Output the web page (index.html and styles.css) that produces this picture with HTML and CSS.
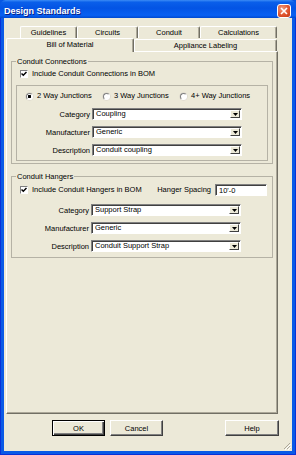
FILE: index.html
```html
<!DOCTYPE html>
<html lang="en">

<head>
    <meta charset="UTF-8">
    <meta name="viewport" content="width=device-width, initial-scale=1.0">
    <title>Design Standards</title>
    <link rel="stylesheet" href="styles.css">
</head>

<body>
    <div class="window">
        <div class="titlebar">
            <span class="title">Design Standards</span>
            <span class="close-btn">
                <svg width="8" height="8" viewBox="0 0 8 8"><path d="M1 1L7 7M7 1L1 7" stroke="#fff" stroke-width="1.6" /></svg>
            </span>
        </div>

        <div class="frame">
            <div class="client">
                <div class="tab-row back">
                    <div class="tab w-guidelines">Guidelines</div>
                    <div class="tab w-circuits">Circuits</div>
                    <div class="tab w-conduit">Conduit</div>
                    <div class="tab w-calc">Calculations</div>
                </div>
                <div class="tab-row front">
                    <div class="tab active w-bom">Bill of Material</div>
                    <div class="tab w-labeling">Appliance Labeling</div>
                </div>

                <div class="panel">
                    <fieldset class="group">
                        <legend>Conduit Connections</legend>
                        <div class="check-row">
                            <span class="checkbox"><svg width="6" height="6" viewBox="0 0 6 6"><path d="M0.5 2.5L2.3 4.3L5.5 1" stroke="#000" stroke-width="1.5" fill="none" /></svg></span>
                            Include Conduit Connections in BOM
                        </div>

                        <div class="subgroup">
                            <div class="radio-row">
                                <span class="radio-opt"><span class="radio on"></span>2 Way Junctions</span>
                                <span class="radio-opt"><span class="radio"></span>3 Way Junctions</span>
                                <span class="radio-opt"><span class="radio"></span>4+ Way Junctions</span>
                            </div>
                            <div class="field first">
                                <span class="field-label">Category</span>
                                <div class="combo">Coupling<span class="drop"><svg width="5" height="3" viewBox="0 0 5 3"><path d="M0 0H5L2.5 3Z" /></svg></span></div>
                            </div>
                            <div class="field">
                                <span class="field-label">Manufacturer</span>
                                <div class="combo">Generic<span class="drop"><svg width="5" height="3" viewBox="0 0 5 3"><path d="M0 0H5L2.5 3Z" /></svg></span></div>
                            </div>
                            <div class="field">
                                <span class="field-label">Description</span>
                                <div class="combo">Conduit coupling<span class="drop"><svg width="5" height="3" viewBox="0 0 5 3"><path d="M0 0H5L2.5 3Z" /></svg></span></div>
                            </div>
                        </div>
                    </fieldset>

                    <fieldset class="group hangers">
                        <legend>Conduit Hangers</legend>
                        <div class="check-row tall">
                            <span class="checkbox"><svg width="6" height="6" viewBox="0 0 6 6"><path d="M0.5 2.5L2.3 4.3L5.5 1" stroke="#000" stroke-width="1.5" fill="none" /></svg></span>
                            Include Conduit Hangers in BOM
                            <span class="spacing-label">Hanger Spacing</span>
                            <div class="textbox">10'-0</div>
                        </div>
                        <div class="field spaced">
                            <span class="field-label">Category</span>
                            <div class="combo">Support Strap<span class="drop"><svg width="5" height="3" viewBox="0 0 5 3"><path d="M0 0H5L2.5 3Z" /></svg></span></div>
                        </div>
                        <div class="field">
                            <span class="field-label">Manufacturer</span>
                            <div class="combo">Generic<span class="drop"><svg width="5" height="3" viewBox="0 0 5 3"><path d="M0 0H5L2.5 3Z" /></svg></span></div>
                        </div>
                        <div class="field">
                            <span class="field-label">Description</span>
                            <div class="combo">Conduit Support Strap<span class="drop"><svg width="5" height="3" viewBox="0 0 5 3"><path d="M0 0H5L2.5 3Z" /></svg></span></div>
                        </div>
                    </fieldset>
                </div>

                <div class="button-row">
                    <button class="btn default">OK</button>
                    <button class="btn">Cancel</button>
                    <button class="btn help">Help</button>
                </div>

                <span class="grip">
                    <svg width="8" height="8" viewBox="0 0 8 8">
                        <path d="M7 1L1 7M7 4L4 7M7 6.5L6.5 7" stroke="#aca899" stroke-width="1" />
                        <path d="M8 2L2 8M8 5L5 8" stroke="#fff" stroke-width="1" />
                    </svg>
                </span>
            </div>
        </div>
    </div>
</body>

</html>
```

FILE: styles.css
```css
* {
    box-sizing: border-box;
}

body {
    margin: 0;
    font-family: "Liberation Sans", Arial, sans-serif;
    font-size: 7.5px;
    color: #000;
    background: #fff;
}

.window {
    width: 296px;
    height: 455px;
    display: flex;
    flex-direction: column;
    background: #0857e2;
}

.titlebar {
    height: 18px;
    display: flex;
    align-items: center;
    justify-content: space-between;
    padding: 3px 5px 0 4px;
    background: linear-gradient(to bottom, #3c8cf5 0%, #0a5fea 12%, #0354e4 45%, #0860f2 85%, #0049cf 100%);
    border-radius: 6px 6px 0 0;
}

.title {
    color: #fff;
    font-weight: bold;
    font-size: 9px;
    text-shadow: 1px 1px #0a1f84;
}

.close-btn {
    width: 14px;
    height: 14px;
    display: flex;
    align-items: center;
    justify-content: center;
    border: 1px solid #fff;
    border-radius: 3px;
    background: radial-gradient(circle at 35% 30%, #f09a7c 0%, #e0552f 55%, #c23a14 100%);
}

.frame {
    flex: 1;
    display: flex;
    padding: 0 4px 4px;
    background: #0a5ae6;
    box-shadow: inset 1px 0 #0831d9, inset -1px 0 #0831d9, inset 0 -1px #0831d9;
}

.client {
    flex: 1;
    display: flex;
    flex-direction: column;
    position: relative;
    padding: 8px 0 0 2px;
    background: #ece9d8;
}

/* tabs */

.tab-row {
    display: flex;
}

.tab-row.back {
    height: 12px;
    margin-left: 14px;
}

.tab-row.front {
    height: 13px;
    align-items: flex-end;
}

.tab {
    height: 12px;
    display: flex;
    align-items: center;
    justify-content: center;
    line-height: 1;
    background: #ece9d8;
    border-top: 1px solid #fff;
    border-left: 1px solid #fff;
    border-right: 1px solid #716f64;
    box-shadow: inset -1px 0 #aca899;
    border-radius: 2px 2px 0 0;
}

.tab.active {
    height: 14px;
    margin-bottom: -1px;
    padding-bottom: 1px;
    z-index: 1;
}

.w-guidelines { width: 57px; }
.w-circuits { width: 61px; }
.w-conduit { width: 62px; }
.w-calc { width: 77px; }
.w-bom { width: 128px; }
.w-labeling { width: 143px; }

.panel {
    width: 272px;
    height: 363px;
    padding: 5px 4px 0 4px;
    border-top: 1px solid #fff;
    border-left: 1px solid #fff;
    border-right: 1px solid #716f64;
    border-bottom: 1px solid #716f64;
    box-shadow: inset -1px -1px #aca899;
}

/* group boxes */

.group {
    margin: 0;
    min-width: 0;
    padding: 3px 4px 2px 4px;
    border: 1px solid #b5b2a5;
}

.group.hangers {
    margin-top: 8px;
    padding-bottom: 5px;
}

.group legend {
    padding: 0 1px;
    line-height: 9px;
}

.check-row {
    height: 9px;
    display: flex;
    align-items: center;
    line-height: 1;
}

.check-row.tall {
    height: 12px;
}

.checkbox {
    width: 8px;
    height: 8px;
    margin: 0 4px;
    display: flex;
    align-items: center;
    justify-content: center;
    background: #fff;
    border: 1px solid;
    border-color: #808080 #fff #fff #808080;
}

.spacing-label {
    margin-left: auto;
    margin-right: 4px;
}

.textbox {
    width: 52px;
    height: 12px;
    margin-right: 1px;
    padding: 1px 0 0 3px;
    line-height: 9px;
    background: #fff;
    border: 1px solid;
    border-color: #808080 #fff #fff #808080;
    box-shadow: inset 1px 1px #404040;
}

.subgroup {
    margin-top: 7px;
    padding-bottom: 4px;
    border: 1px solid #b5b2a5;
}

.radio-row {
    height: 10px;
    margin: 5px 0 0 9px;
    display: flex;
    align-items: center;
    line-height: 1;
}

.radio-opt {
    width: 77px;
    display: flex;
    align-items: center;
}

.radio {
    width: 7px;
    height: 7px;
    margin-right: 4px;
    border-radius: 50%;
    background: #fff;
    border: 1px solid;
    border-color: #808080 #fff #fff #808080;
    box-shadow: 0 0 0 0.5px #d4d0c8;
}

.radio.on {
    background: radial-gradient(circle, #000 0 1.4px, #fff 1.6px);
}

/* labelled combo boxes */

.field {
    height: 12px;
    margin-top: 6px;
    display: flex;
    align-items: center;
}

.field.first {
    margin-top: 7px;
}

.field.spaced {
    margin-top: 8px;
}

.field-label {
    width: 73px;
    margin-right: 2px;
    text-align: right;
}

.combo {
    width: 150px;
    height: 12px;
    display: flex;
    align-items: center;
    justify-content: space-between;
    padding: 0 1px 0 3px;
    background: #fff;
    border: 1px solid;
    border-color: #808080 #fff #fff #808080;
    box-shadow: inset 1px 1px #404040;
    line-height: 1;
}

.drop {
    width: 10px;
    height: 8px;
    display: flex;
    align-items: center;
    justify-content: center;
    background: #ece9d8;
    border: 1px solid;
    border-color: #fff #404040 #404040 #fff;
}

/* buttons */

.button-row {
    width: 273px;
    height: 16px;
    margin-top: 6px;
    padding-left: 46px;
    display: flex;
}

.btn {
    width: 53px;
    height: 16px;
    margin: 0 5px 0 0;
    padding: 0;
    font-family: inherit;
    font-size: 7.5px;
    color: #000;
    background: #ece9d8;
    border: 1px solid;
    border-color: #fff #404040 #404040 #fff;
    box-shadow: inset -1px -1px #808080;
}

.btn.default {
    border: 1px solid #000;
    box-shadow: inset 1px 1px #fff, inset -1px -1px #404040, inset -2px -2px #808080;
}

.btn.help {
    width: 54px;
    margin: 0 0 0 auto;
}

.grip {
    position: absolute;
    right: 1px;
    bottom: 1px;
    width: 8px;
    height: 8px;
    display: flex;
}
```
